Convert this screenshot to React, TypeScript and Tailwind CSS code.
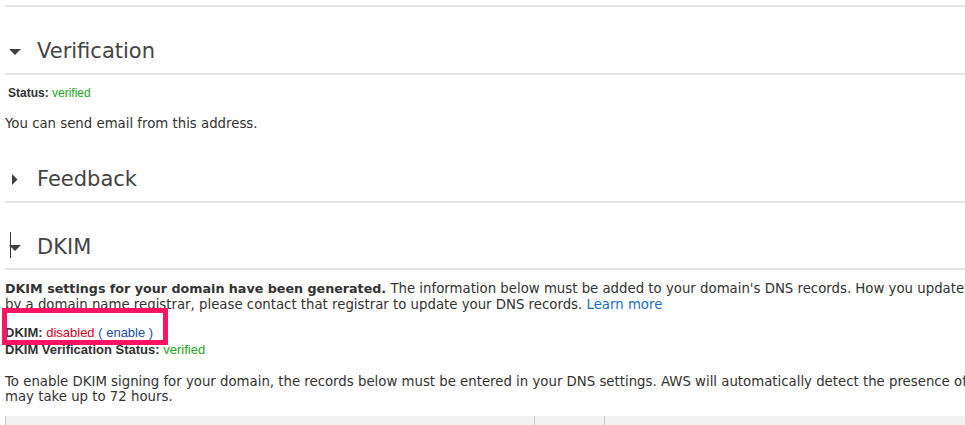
import React from 'react';

const font = { fontFamily: '"DejaVu Sans", Verdana, sans-serif' };
const arial = { fontFamily: '"Liberation Sans", Arial, sans-serif' };

const Rule = () => <div className="h-[2px] bg-[#e6e4e2]" />;

const Caret: React.FC<{ open: boolean; cursor?: boolean }> = ({ open, cursor }) => (
  <div className="relative w-[32px] h-[26px] flex items-center">
    {open ? (
      <svg width="12" height="7" viewBox="0 0 12 7" className="ml-[4px] mt-[2px]">
        <polygon points="0,0 12,0 6,6" fill="#3f3f3f" />
      </svg>
    ) : (
      <svg width="6" height="11" viewBox="0 0 6 11" className="ml-[7px]">
        <polygon points="0,0 5.5,5.5 0,11" fill="#3f3f3f" />
      </svg>
    )}
    {cursor && <div className="absolute left-[5px] top-[-2px] w-px h-[26px] bg-[#333]" />}
  </div>
);

const Header: React.FC<{ title: string; open: boolean; h: string; pb: string; cursor?: boolean }> = ({ title, open, h, pb, cursor }) => (
  <div className={`flex items-end ${h} ${pb}`}>
    <Caret open={open} cursor={cursor} />
    <span className="text-[21px] leading-[26px] text-[#444]">{title}</span>
  </div>
);

export default function App() {
  return (
    <div className="relative w-[965px] h-[425px] overflow-hidden bg-[#fdfefd] text-[#333]" style={font}>
      <div className="pl-[5px]">
        <div className="mt-[5px]">
          <Rule />
        </div>
        <Header title="Verification" open h="h-[66px]" pb="pb-[9px]" />
        <Rule />
        <div className="mt-[10px] text-[12px] leading-[16px] pl-[3px]" style={arial}>
          <span className="font-bold text-[#333]">Status:</span>
          <span className="text-[#1ea81e]"> verified</span>
        </div>
        <div className="mt-[15px] text-[13.3px] leading-[16px] text-[#333]">You can send email from this address.</div>

        <Header title="Feedback" open={false} h="h-[69px]" pb="pb-[9px]" />
        <Rule />
        <Header title="DKIM" open h="h-[65px]" pb="pb-[8px]" cursor />
        <Rule />

        <div className="mt-[11px] text-[13.3px] leading-[16px] text-[#333] whitespace-nowrap">
          <div>
            <span className="font-bold text-[12.7px]">DKIM settings for your domain have been generated.</span> The information below must be added to your domain's DNS records. How you update
          </div>
          <div>
            by a domain name registrar, please contact that registrar to update your DNS records.{' '}
            <span className="text-[#1a6ec8]">Learn more</span>
          </div>
        </div>

        <div className="mt-[11px] text-[13px] leading-[17px] text-[#333] whitespace-nowrap" style={arial}>
          <div>
            <span className="font-bold">DKIM:</span> <span className="text-[#d9001b]">disabled</span>{' '}
            <span className="text-[#1a4fa0]">( enable )</span>
          </div>
          <div>
            <span className="font-bold">DKIM Verification Status:</span> <span className="text-[#1ea81e]">verified</span>
          </div>
        </div>

        <div className="mt-[16px] text-[13.3px] leading-[15px] text-[#333] whitespace-nowrap">
          <div>
            To enable DKIM signing for your domain, the records below must be entered in your DNS settings. AWS will automatically detect the presence of
          </div>
          <div>may take up to 72 hours.</div>
        </div>

        <div className="mt-[12px] flex h-[20px] bg-[#f1f2f1]">
          <div className="w-[529px] border-l border-[#c8c8c8]" />
          <div className="w-[70px] border-l border-[#c8c8c8]" />
          <div className="flex-1 border-l border-[#c8c8c8]" />
        </div>
      </div>

      <div className="absolute left-[2px] top-[308px] w-[166px] h-[37px] border-[5px] border-[#ff1464]" />
    </div>
  );
}
